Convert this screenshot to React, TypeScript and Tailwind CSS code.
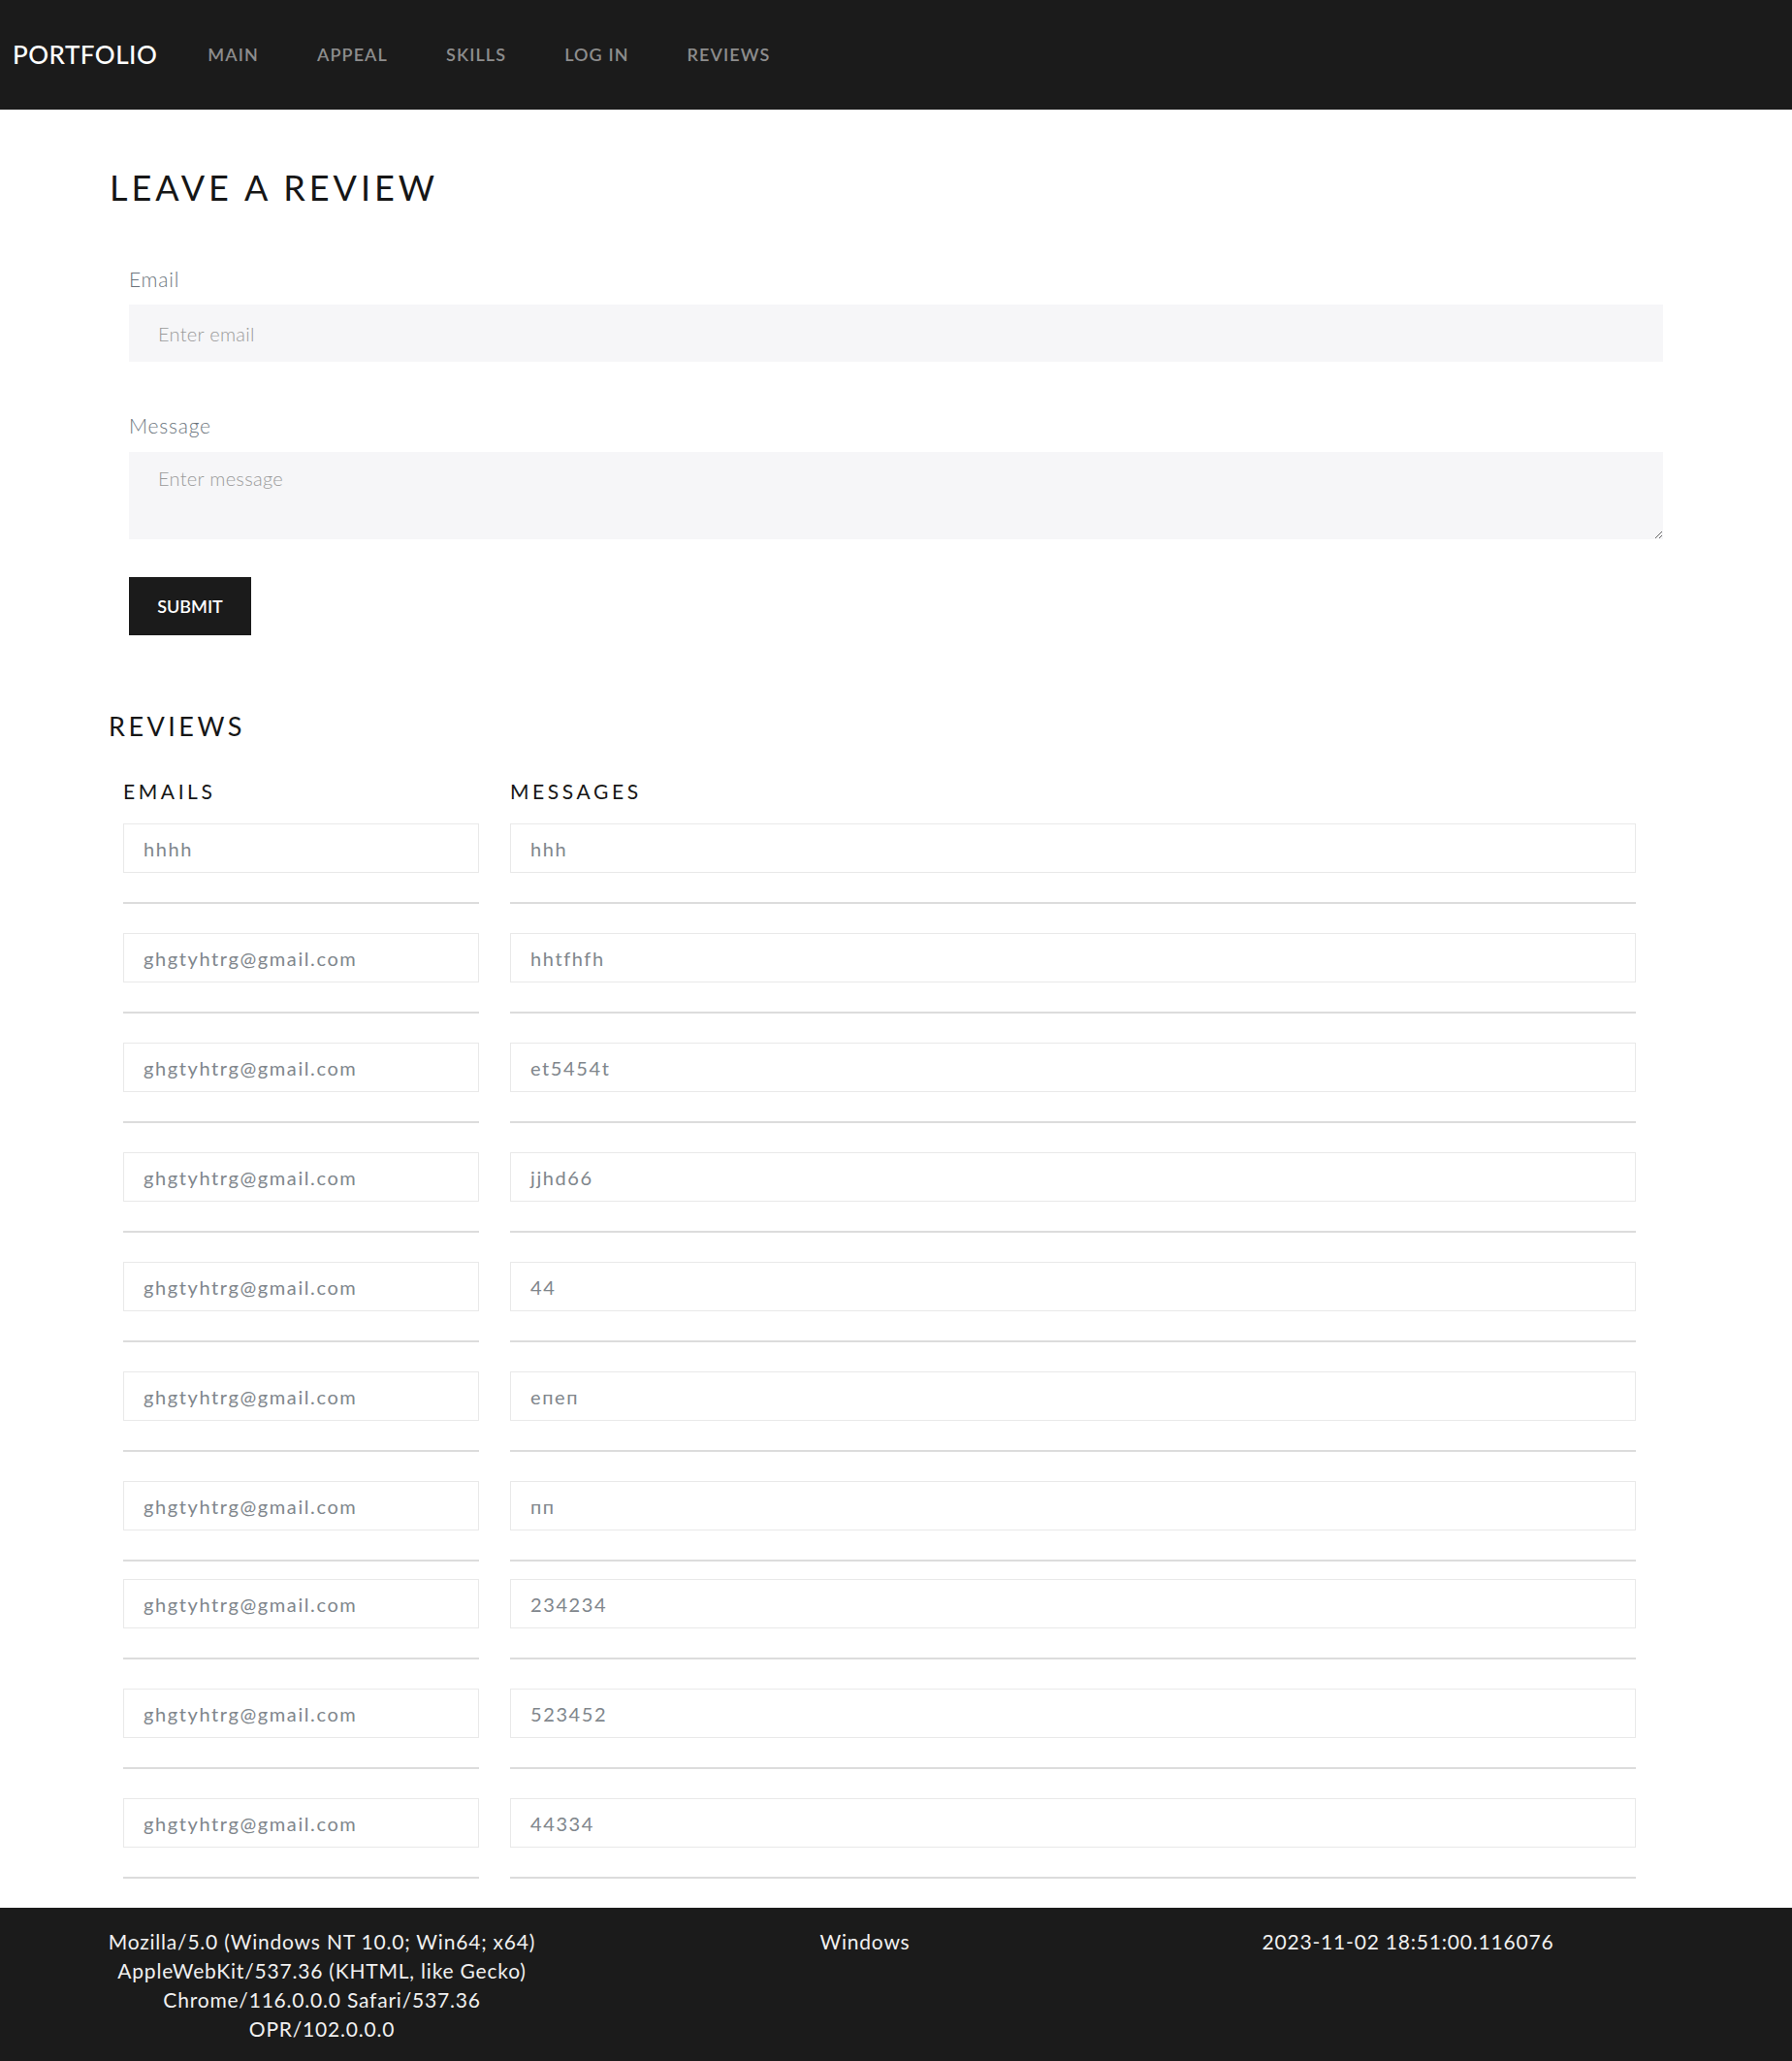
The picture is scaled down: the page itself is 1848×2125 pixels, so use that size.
import React from "react";

const rows: { email: string; msg: string }[] = [
  { email: "hhhh", msg: "hhh" },
  { email: "ghgtyhtrg@gmail.com", msg: "hhtfhfh" },
  { email: "ghgtyhtrg@gmail.com", msg: "et5454t" },
  { email: "ghgtyhtrg@gmail.com", msg: "jjhd66" },
  { email: "ghgtyhtrg@gmail.com", msg: "44" },
  { email: "ghgtyhtrg@gmail.com", msg: "епеп" },
  { email: "ghgtyhtrg@gmail.com", msg: "пп" },
  { email: "ghgtyhtrg@gmail.com", msg: "234234" },
  { email: "ghgtyhtrg@gmail.com", msg: "523452" },
  { email: "ghgtyhtrg@gmail.com", msg: "44334" },
];

const font = { fontFamily: 'Lato, "Noto Sans", sans-serif' };

export default function App() {
  return (
    <div className="w-[1848px] bg-white" style={font}>
      {/* Nav */}
      <nav className="h-[113px] bg-[#1b1b1b] flex items-center pl-[13px] pb-[2px]">
        <span className="text-[26px] font-medium text-white tracking-[0.5px] leading-none">PORTFOLIO</span>
        <ul className="flex items-center ml-[52px] gap-[60px] text-[18px] font-semibold text-[#8d8d8d] tracking-[1.1px] leading-none">
          <li>MAIN</li>
          <li>APPEAL</li>
          <li>SKILLS</li>
          <li>LOG IN</li>
          <li>REVIEWS</li>
        </ul>
      </nav>

      {/* Form section */}
      <section className="px-[113px] pt-[58px]">
        <h1 className="text-[36px] font-normal text-[#161616] tracking-[4px] leading-[44px]">LEAVE A REVIEW</h1>
        <form className="px-[20px] pt-[61px]" onSubmit={(e) => e.preventDefault()}>
          <label className="block text-[21px] font-light text-[#6c757d] tracking-[0.8px] leading-[24px]">Email</label>
          <input
            type="text"
            placeholder="Enter email"
            className="mt-[14px] block w-full h-[59px] bg-[#f6f6f8] px-[30px] text-[20px] font-light text-[#555] placeholder:text-[#9a9a9a] tracking-[0.3px] outline-none"
          />
          <label className="block mt-[54px] text-[21px] font-light text-[#6c757d] tracking-[0.8px] leading-[24px]">Message</label>
          <textarea
            placeholder="Enter message"
            className="mt-[15px] block w-full h-[90px] bg-[#f6f6f8] px-[30px] pt-[12px] text-[20px] font-light text-[#555] placeholder:text-[#9a9a9a] tracking-[0.3px] outline-none"
          />
          <button
            type="submit"
            className="mt-[39px] block w-[126px] h-[60px] bg-[#1b1b1b] text-white text-[18px] font-semibold text-center"
          >
            SUBMIT
          </button>
        </form>
      </section>

      {/* Reviews */}
      <section className="px-[112px] pt-[77px] pb-[30px]">
        <h2 className="text-[27px] font-normal text-[#161616] tracking-[3.5px] leading-[34px]">REVIEWS</h2>
        <div className="pl-[15px] pt-[37px]">
          <div className="flex gap-[32px] text-[21px] font-normal text-[#161616] tracking-[3.6px] leading-[26px]">
            <div className="w-[367px]">EMAILS</div>
            <div className="w-[1161px]">MESSAGES</div>
          </div>
          <div className="pt-[20px]">
            {rows.map((r, i) => (
              <div key={i} className={i === 0 ? "" : i === 7 ? "mt-[18px]" : "mt-[30px]"}>
                <div className="flex gap-[32px]">
                  <div className="w-[367px] h-[51px] border border-[#e9e9e9] flex items-center pl-[20px] text-[20px] font-normal text-[#80868c] tracking-[1.6px]">
                    {r.email}
                  </div>
                  <div className="w-[1161px] h-[51px] border border-[#e9e9e9] flex items-center pl-[20px] text-[20px] font-normal text-[#80868c] tracking-[1.6px]">
                    {r.msg}
                  </div>
                </div>
                <div className="flex gap-[32px] mt-[30px]">
                  <div className="w-[367px] h-[2px] bg-[#dcdcdc]" />
                  <div className="w-[1161px] h-[2px] bg-[#dcdcdc]" />
                </div>
              </div>
            ))}
          </div>
        </div>
      </section>

      {/* Footer */}
      <footer className="bg-[#1b1b1b] h-[159px] pt-[20px] flex pl-[52px] text-[21px] font-normal text-[#f0f0f0] tracking-[0.8px] leading-[30px]">
        <div className="w-[560px] text-center">
          Mozilla/5.0 (Windows NT 10.0; Win64; x64)
          <br />
          AppleWebKit/537.36 (KHTML, like Gecko)
          <br />
          Chrome/116.0.0.0 Safari/537.36
          <br />
          OPR/102.0.0.0
        </div>
        <div className="w-[560px] text-center">Windows</div>
        <div className="w-[560px] text-center">2023-11-02 18:51:00.116076</div>
      </footer>
    </div>
  );
}
